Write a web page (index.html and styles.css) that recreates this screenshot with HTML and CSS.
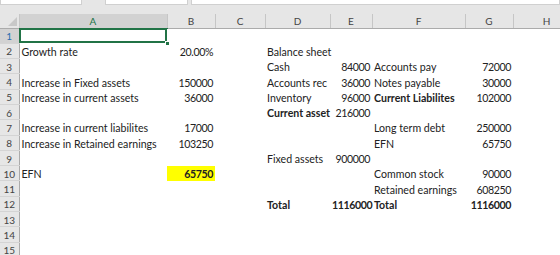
FILE: index.html
```html
<!DOCTYPE html>
<html lang="en">
<head>
    <meta charset="UTF-8">
    <title>EFN - Balance sheet</title>
    <link rel="stylesheet" href="styles.css">
</head>
<body>
    <div class="topbar">
        <div class="box box-name"></div>
        <div class="box box-fx"></div>
        <div class="box box-formula"></div>
    </div>

    <table class="sheet">
        <colgroup>
            <col class="c-row">
            <col class="c-a">
            <col class="c-b">
            <col class="c-c">
            <col class="c-d">
            <col class="c-e">
            <col class="c-f">
            <col class="c-g">
            <col class="c-h">
        </colgroup>
        <thead>
            <tr>
                <th class="corner"><span class="tri"></span></th>
                <th class="sel">A</th>
                <th>B</th>
                <th>C</th>
                <th>D</th>
                <th>E</th>
                <th>F</th>
                <th>G</th>
                <th>H</th>
            </tr>
        </thead>
        <tbody>
            <tr>
                <td class="rh sel">1</td>
                <td class="active"><span class="handle"></span></td>
                <td></td><td></td><td></td><td></td><td></td><td></td><td></td>
            </tr>
            <tr>
                <td class="rh">2</td>
                <td>Growth rate</td>
                <td class="num">20.00%</td>
                <td></td>
                <td>Balance sheet</td>
                <td></td><td></td><td></td><td></td>
            </tr>
            <tr>
                <td class="rh">3</td>
                <td></td><td></td><td></td>
                <td>Cash</td>
                <td class="num">84000</td>
                <td>Accounts pay</td>
                <td class="num">72000</td>
                <td></td>
            </tr>
            <tr>
                <td class="rh">4</td>
                <td>Increase in Fixed assets</td>
                <td class="num">150000</td>
                <td></td>
                <td>Accounts rec</td>
                <td class="num">36000</td>
                <td>Notes payable</td>
                <td class="num">30000</td>
                <td></td>
            </tr>
            <tr>
                <td class="rh">5</td>
                <td>Increase in current assets</td>
                <td class="num">36000</td>
                <td></td>
                <td>Inventory</td>
                <td class="num">96000</td>
                <td class="bold">Current Liabilites</td>
                <td class="num">102000</td>
                <td></td>
            </tr>
            <tr>
                <td class="rh">6</td>
                <td></td><td></td><td></td>
                <td class="bold">Current asset</td>
                <td class="num">216000</td>
                <td></td><td></td><td></td>
            </tr>
            <tr>
                <td class="rh">7</td>
                <td>Increase in current liabilites</td>
                <td class="num">17000</td>
                <td></td><td></td><td></td>
                <td>Long term debt</td>
                <td class="num">250000</td>
                <td></td>
            </tr>
            <tr>
                <td class="rh">8</td>
                <td>Increase in Retained earnings</td>
                <td class="num">103250</td>
                <td></td><td></td><td></td>
                <td>EFN</td>
                <td class="num">65750</td>
                <td></td>
            </tr>
            <tr>
                <td class="rh">9</td>
                <td></td><td></td><td></td>
                <td>Fixed assets</td>
                <td class="num">900000</td>
                <td></td><td></td><td></td>
            </tr>
            <tr>
                <td class="rh">10</td>
                <td>EFN</td>
                <td class="num bold hl">65750</td>
                <td></td><td></td><td></td>
                <td>Common stock</td>
                <td class="num">90000</td>
                <td></td>
            </tr>
            <tr>
                <td class="rh">11</td>
                <td></td><td></td><td></td><td></td><td></td>
                <td>Retained earnings</td>
                <td class="num">608250</td>
                <td></td>
            </tr>
            <tr>
                <td class="rh">12</td>
                <td></td><td></td><td></td>
                <td class="bold">Total</td>
                <td class="num bold">1116000</td>
                <td class="bold">Total</td>
                <td class="num bold">1116000</td>
                <td></td>
            </tr>
            <tr>
                <td class="rh">13</td>
                <td></td><td></td><td></td><td></td><td></td><td></td><td></td><td></td>
            </tr>
            <tr>
                <td class="rh">14</td>
                <td></td><td></td><td></td><td></td><td></td><td></td><td></td><td></td>
            </tr>
            <tr>
                <td class="rh">15</td>
                <td></td><td></td><td></td><td></td><td></td><td></td><td></td><td></td>
            </tr>
        </tbody>
    </table>
</body>
</html>
```

FILE: styles.css
```css
* {
    margin: 0;
    padding: 0;
    box-sizing: border-box;
}

body {
    font-family: Lato, 'Liberation Sans', sans-serif;
    font-size: 10.6px;
    color: #222;
    background: #fff;
    width: 560px;
    height: 255px;
    overflow: hidden;
}

.topbar {
    display: flex;
    height: 14px;
    background: #e6e6e6;
}

.box {
    height: 5px;
    background: #fff;
    border: 1px solid #d0d0d0;
    border-top: none;
}

.box-name {
    width: 82px;
    margin-right: 23px;
}

.box-fx {
    width: 83px;
    margin-right: 3px;
}

.box-formula {
    flex: 1;
}

.sheet {
    border-collapse: collapse;
    table-layout: fixed;
    width: 580px;
}

.c-row { width: 19px; }
.c-a { width: 148px; }
.c-b { width: 48px; }
.c-c { width: 50px; }
.c-d { width: 65px; }
.c-e { width: 42px; }
.c-f { width: 93px; }
.c-g { width: 48px; }
.c-h { width: 67px; }

th {
    height: 14px;
    background: #e6e6e6;
    color: #444;
    font-weight: normal;
    font-size: 10px;
    line-height: 12px;
    border-right: 1px solid #c6c6c6;
    border-bottom: 1px solid #ababab;
    text-align: center;
}

th.sel {
    background: #d2d2d2;
    color: #217346;
    border-bottom-color: #217346;
}

.corner {
    position: relative;
}

.tri {
    position: absolute;
    right: 2px;
    bottom: 2px;
    width: 0;
    height: 0;
    border-left: 9px solid transparent;
    border-bottom: 9px solid #c8c8c8;
}

tbody tr {
    height: 15.3px;
}

td {
    padding: 2px 2px 0;
    white-space: nowrap;
    line-height: 12px;
    vertical-align: middle;
}

td.num {
    text-align: right;
    padding-right: 2px;
    letter-spacing: -0.4px;
}

td.rh {
    background: #e6e6e6;
    color: #444;
    text-align: center;
    font-size: 10px;
    padding: 1px 0 0;
    letter-spacing: 0;
    border-bottom: 1px solid #d4d4d4;
    border-right: 1px solid #ababab;
}

td.rh.sel {
    background: #d2d2d2;
    color: #2a6fb0;
    border-right-color: #217346;
}

.bold {
    font-weight: bold;
}

.hl {
    background: #ffff00;
}

.active {
    position: relative;
    outline: 2px solid #217346;
    outline-offset: -2px;
}

.handle {
    position: absolute;
    right: -3px;
    bottom: -3px;
    width: 5px;
    height: 5px;
    background: #217346;
    border: 1px solid #fff;
}
```
